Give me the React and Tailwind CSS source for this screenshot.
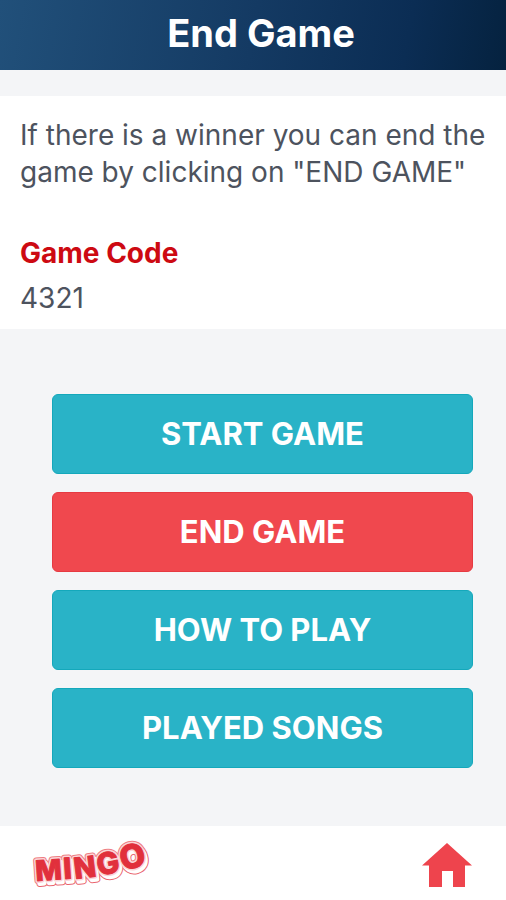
const ACTIONS = [
  { label: 'START GAME', color: 'bg-[#29b3c7] border-[#14a8bb]' },
  { label: 'END GAME', color: 'bg-[#f0484e] border-[#e63a42]' },
  { label: 'HOW TO PLAY', color: 'bg-[#29b3c7] border-[#14a8bb]' },
  { label: 'PLAYED SONGS', color: 'bg-[#29b3c7] border-[#14a8bb]' },
];

const LOGO_LETTERS = [
  { char: 'M', x: 12, y: 55, size: 28, rotate: -4 },
  { char: 'I', x: 40, y: 53, size: 29, rotate: -4 },
  { char: 'N', x: 51, y: 53, size: 29, rotate: -7 },
  { char: 'G', x: 75, y: 50, size: 30, rotate: -12 },
  { char: 'O', x: 99, y: 45, size: 33, rotate: -15 },
];

const LogoLayer = (props) => (
  <g strokeLinejoin="round" {...props}>
    {LOGO_LETTERS.map(({ char, x, y, size, rotate }) => (
      <text key={char} x={x} y={y} fontSize={size} transform={`rotate(${rotate} ${x} ${y})`}>
        {char}
      </text>
    ))}
  </g>
);

const Logo = () => (
  <svg
    viewBox="0 0 140 74"
    className="w-[140px] h-[74px] font-['Inter',sans-serif] font-extrabold"
    role="img"
    aria-label="Mingo"
  >
    <g transform="translate(2 3)">
      <LogoLayer fill="#e9636c" stroke="#e9636c" strokeWidth="6" />
    </g>
    <LogoLayer fill="#ee7d84" stroke="#ee7d84" strokeWidth="6" />
    <g transform="translate(2 3)">
      <LogoLayer fill="#fff" stroke="#fff" strokeWidth="4" />
    </g>
    <LogoLayer fill="#fbd5d7" stroke="#fbd5d7" strokeWidth="4" />
    <LogoLayer fill="#e1303c" stroke="#e1303c" strokeWidth="1" />
  </svg>
);

const HomeIcon = () => (
  <svg viewBox="0 0 50 44" className="w-[50px] h-11" fill="#ee444d" aria-hidden="true">
    <path d="M25 0 L50 22.5 H43 V44 H31 V28 H20 V44 H7 V22.5 H0 Z" />
  </svg>
);

const App = () => {
  return (
    <div className="min-h-screen flex flex-col bg-[#f4f5f7] font-['Inter',sans-serif]">
      <header className="h-[70px] pb-1 flex items-center justify-center bg-linear-[100deg,#21507a_0%,#143a63_50%,#0b2d54_80%,#05223f_100%] pl-4">
        <h1 className="text-[38px] leading-10 font-bold text-white">End Game</h1>
      </header>

      <section className="mt-[26px] px-5 pt-[21px] pb-3 bg-white text-[#4d535e]">
        <p className="text-[28px] leading-[37px]">
          If there is a winner you can end the game by clicking on "END GAME"
        </p>
        <h2 className="mt-11 text-[28px] leading-[37px] font-bold text-[#cd0a12]">Game Code</h2>
        <p className="mt-2 text-[28px] leading-[37px]">4321</p>
      </section>

      <main className="flex-1 flex flex-col gap-[18px] pl-[52px] pr-[33px] pt-[65px] pb-14">
        {ACTIONS.map(({ label, color }) => (
          <button
            key={label}
            type="button"
            className={`h-20 rounded-md border text-[31px] leading-10 font-bold text-white ${color}`}
          >
            {label}
          </button>
        ))}
      </main>

      <footer className="h-[74px] flex items-center justify-between bg-white pl-6 pr-[34px]">
        <Logo />
        <a href="#home" aria-label="Home" className="pt-1">
          <HomeIcon />
        </a>
      </footer>
    </div>
  );
};

export default App;
